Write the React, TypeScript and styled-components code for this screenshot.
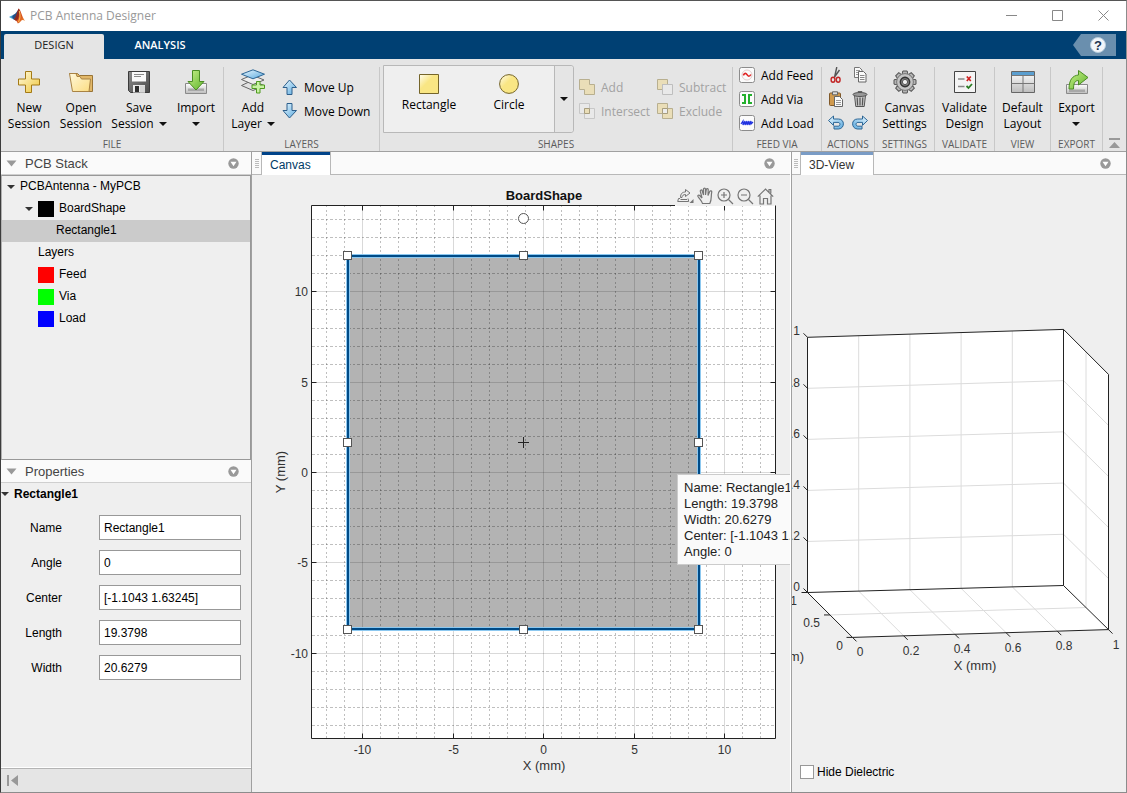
import React from 'react';
import styled, { createGlobalStyle } from 'styled-components';

const UI_FONT = '"Open Sans", "Noto Sans", sans-serif';
const PLOT_FONT = '"Liberation Sans", Arial, sans-serif';

const GlobalStyle = createGlobalStyle`
  *, *::before, *::after { box-sizing: border-box; }
  body { margin: 0; background: #efefef; font-family: ${PLOT_FONT}; font-size: 12px; color: #000; }
  button, input { font: inherit; color: inherit; }
  button { margin: 0; padding: 0; border: 0; background: none; cursor: default; }
  svg { display: block; flex: none; }
`;

const Shell = styled.div`
  min-height: 100vh;
  display: flex;
  flex-direction: column;
  overflow: hidden;
  border: 1px solid #8c8c8c;
  border-left-color: #3c3c3c;
  border-top-color: #555;
  background: #efefef;
`;

/* ---------- title bar ---------- */
const TitleBar = styled.header`
  height: 30px;
  display: flex;
  align-items: center;
  background: #fff;
  color: #999;
  font-family: ${UI_FONT};
  padding-left: 8px;
`;
const Title = styled.h1`
  flex: 1;
  margin: 0 0 0 5px;
  padding-bottom: 2px;
  font-size: 12px;
  font-weight: 400;
`;
const WindowButton = styled.button`
  width: 46px;
  height: 28px;
  margin-bottom: 2px;
  display: flex;
  align-items: center;
  justify-content: center;
`;

/* ---------- toolstrip ---------- */
const TabStrip = styled.nav`
  height: 28px;
  display: flex;
  align-items: flex-end;
  padding: 0 10px 0 3px;
  background: #004073;
  font-family: ${UI_FONT};
`;
const StripTab = styled.button<{ $active?: boolean }>`
  width: ${p => (p.$active ? 100 : 112)}px;
  height: 25px;
  padding-bottom: 4px;
  border-radius: 2px 2px 0 0;
  font-size: 11px;
  font-weight: ${p => (p.$active ? 400 : 600)};
  color: ${p => (p.$active ? '#222' : '#fff')};
  background: ${p => (p.$active ? '#e5e5e5' : 'transparent')};
`;
const HelpButton = styled.button`
  margin: 0 0 3px auto;
`;
const Ribbon = styled.div`
  height: 93px;
  display: flex;
  background: #e5e5e5;
  border-bottom: 1px solid #a0a0a0;
  font-family: ${UI_FONT};
  font-size: 12px;
`;
const Section = styled.section<{ $w: number }>`
  flex: none;
  width: ${p => p.$w}px;
  display: flex;
  flex-direction: column;
`;
const SectionBody = styled.div<{ $start?: boolean }>`
  height: 78px;
  display: flex;
  justify-content: ${p => (p.$start ? 'flex-start' : 'center')};
`;
const SectionLabel = styled.h2`
  margin: 0;
  font-size: 10px;
  line-height: 14px;
  font-weight: 400;
  text-align: center;
  white-space: nowrap;
  color: #5c5c5c;
`;
const Divider = styled.div`
  flex: none;
  width: 1px;
  margin-top: 8px;
  background: #c8c8c8;
`;
const BigButton = styled.button<{ $w: number }>`
  flex: none;
  width: ${p => p.$w}px;
  padding-top: 11px;
  display: flex;
  flex-direction: column;
  align-items: center;
  justify-content: flex-start;
  line-height: 16px;
  white-space: nowrap;
`;
const IconSlot = styled.span`
  height: 24px;
  display: flex;
  align-items: center;
`;
const BigLabel = styled.span`
  margin-top: 6px;
  display: flex;
  flex-direction: column;
  align-items: center;
`;
const LabelLine = styled.span`
  height: 16px;
  display: flex;
  align-items: center;
  gap: 5px;
`;
const Stack = styled.div<{ $w?: number; $three?: boolean }>`
  padding-top: ${p => (p.$three ? 4 : 16)}px;
  width: ${p => (p.$w ? p.$w + 'px' : 'auto')};
`;
const RowButton = styled.button`
  height: 24px;
  display: flex;
  align-items: center;
  gap: 6px;
  white-space: nowrap;
  &:disabled { color: #a2a2a2; }
  &:disabled svg { opacity: 0.5; }
`;
const Spread = styled.div`
  flex: 1;
  display: flex;
  align-items: flex-start;
  padding-left: 3px;
`;
const Gallery = styled.div`
  margin-top: 6px;
  margin-right: 5px;
  width: 191px;
  height: 68px;
  display: flex;
  background: #efefef;
  border: 1px solid #b8b8b8;
  border-radius: 0 3px 3px 0;
  padding-left: 5px;
`;
const GalleryItem = styled.button`
  width: 80px;
  padding-top: 8px;
  display: flex;
  flex-direction: column;
  align-items: center;
  justify-content: flex-start;
  gap: 3px;
  line-height: 16px;
`;
const GalleryMore = styled.button`
  margin-left: auto;
  width: 19px;
  display: flex;
  align-items: center;
  justify-content: center;
  background: #e5e5e5;
  border-left: 1px solid #b8b8b8;
  border-radius: 0 3px 3px 0;
`;
const IconGrid = styled.div`
  padding-top: 4px;
  display: grid;
  grid-template-columns: 24px 24px;
  grid-auto-rows: 24px;
`;
const IconButton = styled.button`
  display: flex;
  align-items: center;
  justify-content: center;
`;
const CollapseButton = styled.button`
  margin: auto 6px 3px auto;
`;

/* ---------- panes ---------- */
const Workspace = styled.main`
  flex: 1;
  display: grid;
  grid-template-columns: 251px minmax(0, 539fr) minmax(0, 335fr);
`;
const Sidebar = styled.aside`
  display: flex;
  flex-direction: column;
  border-right: 1px solid #a0a0a0;
`;
const PaneHeader = styled.div`
  height: 23px;
  flex: none;
  display: flex;
  align-items: center;
  gap: 8px;
  padding: 0 12px 0 5px;
  background: #fafafa;
  border-bottom: 1px solid #cfcfcf;
`;
const PaneTitle = styled.h2`
  flex: 1;
  margin: 0;
  font-size: 13px;
  font-weight: 400;
  color: #444;
`;
const Tree = styled.ul`
  flex: 1;
  margin: 0;
  padding: 0;
  list-style: none;
  border: 1px solid #989898;
  border-left-color: #b0b0b0;
`;
const TreeRow = styled.li<{ $indent: number; $selected?: boolean }>`
  height: 22px;
  display: flex;
  align-items: center;
  gap: 5px;
  padding-left: ${p => p.$indent}px;
  background: ${p => (p.$selected ? '#cbcbcb' : 'transparent')};
`;
const TreeText = styled.span`
  line-height: 14px;
  padding-bottom: 2px;
`;
const Swatch = styled.span<{ $color: string }>`
  width: 16px;
  height: 16px;
  background: ${p => p.$color};
`;
const Properties = styled.section`
  flex: none;
  min-height: 308px;
  display: flex;
  flex-direction: column;
`;
const GroupTitle = styled.h3`
  height: 22px;
  margin: 0 0 10px;
  display: flex;
  align-items: center;
  gap: 5px;
  font-size: 12px;
  font-weight: 700;
`;
const Form = styled.form`
  flex: 1;
  display: flex;
  flex-direction: column;
  gap: 10px;
  padding-right: 10px;
`;
const Field = styled.label`
  display: flex;
  align-items: center;
  height: 25px;
`;
const FieldName = styled.span`
  width: 61px;
  margin-right: 37px;
  text-align: right;
`;
const TextBox = styled.input`
  flex: 1;
  min-width: 0;
  height: 25px;
  padding: 0 4px;
  border: 1px solid #989898;
  border-radius: 0;
  background: #fff;
`;
const StatusBar = styled.footer`
  height: 24px;
  display: flex;
  align-items: center;
  padding-left: 6px;
  background: #e5e5e5;
  border-top: 1px solid #b4b4b4;
  box-shadow: 0 -1px 0 #fff;
`;
const Pane = styled.section<{ $edge: 'left' | 'right' }>`
  min-width: 0;
  display: flex;
  flex-direction: column;
  ${p => (p.$edge === 'left' ? 'border-left: 1px solid #a0a0a0;' : 'border-right: 1px solid #fff;')}
`;
const DocBar = styled.div<{ $inset: number }>`
  height: 23px;
  flex: none;
  display: flex;
  align-items: center;
  background: #fafafa;
  box-shadow: inset 0 -1px 0 #b8b8b8;
  padding: 0 15px 0 ${p => p.$inset}px;
`;
const DocTab = styled.button<{ $accent: string; $w: number }>`
  height: 23px;
  width: ${p => p.$w}px;
  margin: 0 auto 0 2px;
  padding-left: 8px;
  text-align: left;
  background: #fff;
  border: 1px solid #b8b8b8;
  border-width: 0 1px;
  box-shadow: inset 0 3px 0 ${p => p.$accent};
  color: ${p => (p.$accent === '#004389' ? '#003a66' : '#333')};
  padding-top: 3px;
`;
const PlotArea = styled.div`
  position: relative;
  flex: 1;
  min-height: 0;
  display: flex;
  overflow: hidden;
`;
const PlotSvg = styled.svg`
  flex: 1 1 0;
  min-width: 0;
  width: 100%;
  height: 100%;
  font-family: ${PLOT_FONT};
`;
const PlotTools = styled.div`
  position: absolute;
  top: 11px;
  right: 16px;
  display: flex;
  gap: 3px;
  background: #efefef;
  height: 20px;
  align-items: center;
  color: #757575;
`;
const Tooltip = styled.div`
  position: absolute;
  left: 425px;
  top: 299px;
  padding: 5px 6px 4px;
  border: 1px solid #ccc;
  background: #fafafa;
  font-size: 13px;
  line-height: 16px;
  white-space: nowrap;
  color: #222;
`;
const PaneFooter = styled.label`
  height: 40px;
  flex: none;
  display: flex;
  align-items: center;
  gap: 3px;
  padding-left: 8px;
`;
const CheckBox = styled.input`
  appearance: none;
  width: 14px;
  height: 14px;
  margin: 0;
  border: 1px solid #989898;
  background: #fff;
  &:checked { background: #004389; }
`;

/* ---------- small glyphs ---------- */
const Caret = ({ color = '#111' }: { color?: string }) => (
  <svg width="8" height="4" viewBox="0 0 8 4"><path d="M0 0h8L4 4z" fill={color} /></svg>
);
const PaneCaret = () => (
  <svg width="11" height="7" viewBox="0 0 11 7"><path d="M.5.5h10L5.500 6.500z" fill="#999" /></svg>
);
const MenuDot = () => (
  <svg width="11" height="11" viewBox="0 0 11 11">
    <circle cx="5.500" cy="5.500" r="5.200" fill="#999" /><path d="M2.500 3.800h6L5.500 8.300z" fill="#fff" />
  </svg>
);
const Grip = () => (
  <svg width="4" height="11" viewBox="0 0 4 11">
    <path d="M0 1.500h4M0 3.500h4M0 5.500h4M0 7.500h4M0 9.500h4" stroke="#bbb" />
  </svg>
);

const HiddenDefs = styled.svg`
  position: absolute;
`;
const Gradients = () => (
  <HiddenDefs width="0" height="0" aria-hidden="true">
    <defs>
      <linearGradient id="gold" x1="0" y1="0" x2="1" y2="1"><stop offset="0" stopColor="#fffbe0" /><stop offset="1" stopColor="#f0c73c" /></linearGradient>
      <linearGradient id="folder" x1="0" y1="0" x2="1" y2="1"><stop offset="0" stopColor="#fff8da" /><stop offset="1" stopColor="#fbdc82" /></linearGradient>
      <linearGradient id="shape" x1="0" y1="0" x2=".7" y2=".7"><stop offset="0" stopColor="#fffdf0" /><stop offset=".6" stopColor="#f9e684" /><stop offset="1" stopColor="#f9e684" /></linearGradient>
      <linearGradient id="green" x1="0" y1="0" x2="1" y2="1"><stop offset="0" stopColor="#c9f08a" /><stop offset="1" stopColor="#5fb52c" /></linearGradient>
      <linearGradient id="sky" x1="0" y1="0" x2="1" y2="1"><stop offset="0" stopColor="#eaf8ff" /><stop offset="1" stopColor="#5aa9de" /></linearGradient>
      <linearGradient id="metal" x1="0" y1="0" x2="0" y2="1"><stop offset="0" stopColor="#fff" /><stop offset="1" stopColor="#bdbdbd" /></linearGradient>
      <linearGradient id="steel" x1="0" y1="0" x2="1" y2="1"><stop offset="0" stopColor="#8c8c8c" /><stop offset="1" stopColor="#4a4a4a" /></linearGradient>
      <linearGradient id="flame" x1="0" y1="0" x2="1" y2="1"><stop offset="0" stopColor="#7a1c1c" /><stop offset=".5" stopColor="#d4481e" /><stop offset="1" stopColor="#f29a34" /></linearGradient>
    </defs>
  </HiddenDefs>
);

const Logo = () => (
  <svg width="16" height="16" viewBox="0 0 16 16">
    <path d="M0 9l4.500-2.200 2.300 1.800L4.800 11.500z" fill="#3f9bd0" />
    <path d="M4.500 6.800C7 6 8 3 9.800 1c-.8 3-1.300 6-3 9.200L4.800 11.500 3 9z" fill="#284f86" />
    <path d="M9.800.6C11.500 1.500 13 9 16 13c-2-1.300-3-1.200-4.200.2-1 1.200-2 2-3 2.300-.8-2.200-2-3.800-4-4 2.600-1.200 3.300-8.500 5-10.900z" fill="url(#flame)" />
    <path d="M9.800.6c.6 3 .8 7-1 10.600L7 13c-.7-.9-1.300-1.300-2.200-1.500C7.600 9.800 8.100 3 9.800.6z" fill="#8f2a20" />
    <path d="M10.300 3c.9 3 1.200 7-.8 11" stroke="#f7b04a" strokeWidth="1.200" fill="none" />
  </svg>
);
const PlusIcon = () => (
  <svg width="24" height="24" viewBox="0 0 24 24"><path d="M8.500 1.500h6v7.500h8v6h-8v7.500h-6V15h-7V9h7z" fill="url(#gold)" stroke="#a47a16" /></svg>
);
const FolderIcon = () => (
  <svg width="26" height="24" viewBox="0 0 26 24">
    <path d="M1.500 3.500h8l2 2h13V21.500H21z" fill="#e2b869" stroke="#997436" />
    <path d="M1.500 3.500h6.500l1 3h3l1.500 2.500h9L21 21.500H4.500z" fill="url(#folder)" stroke="#a98344" />
  </svg>
);
const SaveIcon = () => (
  <svg width="24" height="24" viewBox="0 0 24 24">
    <path d="M1.500 1.500h21v21h-19l-2-2z" fill="url(#steel)" stroke="#3b3b3b" />
    <path d="M5 2h14v9.500H5z" fill="#fafafa" /><path d="M7 4.500h10M7 6.500h7" stroke="#8a8a8a" />
    <path d="M6 15h12v7.500H6z" fill="#ececec" /><path d="M8 16h4v6H8z" fill="#2e2e2e" />
    <path d="M13 15.500h5v7h-5z" fill="#d5d5d5" />
  </svg>
);
const ImportIcon = () => (
  <svg width="24" height="24" viewBox="0 0 24 24">
    <path d="M1.500 13.500h21v10h-21z" fill="url(#metal)" stroke="#8a8a8a" /><path d="M4 18.500h16V21H4z" fill="#a8a8a8" />
    <path d="M8.500.5h7v11h4.500L12 20 4 11.500h4.500z" fill="url(#green)" stroke="#4b8d23" />
  </svg>
);
const LayersIcon = () => (
  <svg width="26" height="26" viewBox="0 0 26 26">
    <path d="M1.500 16.500L12 11.500l12 5-11 5z" fill="#e2e2e2" stroke="#666" />
    <path d="M1.500 10.500L12 6l12 5-11 4.500z" fill="#ededed" stroke="#666" />
    <path d="M1.500 5.200L13 .8l11.500 4.400L13 9.800z" fill="url(#sky)" stroke="#2d6695" />
    <path d="M16.500 12.500h3.500V16h4.500v3.500H20V24h-3.500v-4.500h-4.500V16h4.500z" fill="#c9f2a4" stroke="#4f9a20" />
  </svg>
);
const ArrowIcon = ({ down = false }: { down?: boolean }) => (
  <svg width="16" height="16" viewBox="0 0 16 16">
    <path d={down ? 'M5 .5h5v7h4.500L7.500 15 1 7.500h4z' : 'M5 15.500h5v-7h4.500L7.500 1 1 8.500h4z'} fill="url(#sky)" stroke="#2d5f8c" />
  </svg>
);
const SquareShape = () => (
  <svg width="20" height="20" viewBox="0 0 20 20"><path d="M.5.5h19v19H.5z" fill="url(#shape)" stroke="#75652a" /></svg>
);
const CircleShape = () => (
  <svg width="20" height="20" viewBox="0 0 20 20"><circle cx="10" cy="10" r="9.400" fill="url(#shape)" stroke="#75652a" /></svg>
);
const BoolIcon = ({ kind }: { kind: 'add' | 'subtract' | 'intersect' | 'exclude' }) => (
  <svg width="16" height="16" viewBox="0 0 16 16">
    {kind === 'add' && <path d="M.5.5h10v5h5v10h-10v-5h-5z" fill="#efd98c" stroke="#8d7a3c" />}
    {kind === 'subtract' && <><path d="M.5.5h10v5h-5v5h-5z" fill="#efd98c" stroke="#8d7a3c" /><path d="M5.500 5.500h10v10h-10z" fill="#eee" stroke="#999" /></>}
    {kind === 'intersect' && <><path d="M.5.5h10v10H.5zM5.500 5.500h10v10h-10z" fill="#eee" stroke="#aaa" /><path d="M5.500 5.500h5v5h-5z" fill="#efd98c" stroke="#6d5a1c" /></>}
    {kind === 'exclude' && <><path d="M.5.5h10v10H.5zM5.500 5.500h10v10h-10z" fill="#efd98c" stroke="#8d7a3c" /><path d="M5.500 5.500h5v5h-5z" fill="#f5f5f5" stroke="#6d5a1c" /></>}
  </svg>
);
const ChipIcon = ({ kind }: { kind: 'feed' | 'via' | 'load' }) => (
  <svg width="16" height="16" viewBox="0 0 16 16">
    <rect x=".5" y=".5" width="15" height="15" rx="2" fill="#fbfbfb" stroke="#8c8c8c" />
    {kind === 'feed' && <><circle cx="8" cy="8" r="5" fill="none" stroke="#e3cccc" /><path d="M4.300 8.300c1.200-2.600 2.700-2.300 3.700-.6s2.600 2.300 3.800-.2" fill="none" stroke="#e02424" strokeWidth="1.600" /></>}
    {kind === 'via' && <path d="M3 3h4v10H3v-2h2V5H3zM13 3H9v10h4v-2h-2V5h2z" fill="#22b02c" />}
    {kind === 'load' && <path d="M2 9l2-3v4l2-4v4l2-4v4l2-4v4l2-4v3l2-2" fill="none" stroke="#1c2ee0" strokeWidth="1.200" />}
  </svg>
);
const CutIcon = () => (
  <svg width="16" height="16" viewBox="0 0 16 16">
    <path d="M8.800 0L6.500 10.500M11.500 3L6.500 10" stroke="#555" strokeWidth="1.400" fill="none" />
    <ellipse cx="5" cy="12.700" rx="1.900" ry="2.500" fill="none" stroke="#c22626" strokeWidth="1.400" /><ellipse cx="10.200" cy="12.700" rx="1.900" ry="2.500" fill="none" stroke="#c22626" strokeWidth="1.400" />
  </svg>
);
const CopyIcon = () => (
  <svg width="16" height="16" viewBox="0 0 16 16">
    <path d="M2.500.5h5l2.500 2.500v7.500H2.500z" fill="#fafafa" stroke="#777" /><path d="M4 3.500h4M4 5.500h4M4 7.500h2" stroke="#999" />
    <path d="M6.500 4.500h5l2.500 2.500v8H6.500z" fill="#fafafa" stroke="#666" /><path d="M8 8.500h4.500M8 10.500h4.500M8 12.500h4.500" stroke="#888" />
  </svg>
);
const PasteIcon = () => (
  <svg width="16" height="16" viewBox="0 0 16 16">
    <rect x="1.500" y="2" width="11" height="12.500" rx="1" fill="#d09a4e" stroke="#80592a" /><path d="M4.500.8h5v3h-5z" fill="#ddd" stroke="#666" />
    <path d="M6.500 5.500h5l3 3v7h-8z" fill="#fafafa" stroke="#666" /><path d="M8 9.500h5M8 11.500h5M8 13.500h5" stroke="#999" />
  </svg>
);
const TrashIcon = () => (
  <svg width="16" height="16" viewBox="0 0 16 16">
    <path d="M2.500 4.500h11l-1.300 11H3.800z" fill="#c9c9c9" stroke="#555" /><ellipse cx="8" cy="3.500" rx="7" ry="2" fill="#999" stroke="#555" /><path d="M6 1.500V.6h4v.9" fill="none" stroke="#555" />
    <path d="M5.200 6.500l.4 8M8 6.500v8M10.800 6.500l-.4 8" stroke="#555" strokeWidth="1.200" />
  </svg>
);
const UndoIcon = ({ redo = false }: { redo?: boolean }) => (
  <svg width="16" height="16" viewBox="0 0 16 16">
    <g transform={redo ? 'translate(16 0) scale(-1 1)' : undefined}>
      <path d="M.5 5.500L5.500 1v3h5c6.500 0 6.500 9.500.2 10H6v-2.800h4c2.600 0 2.600-3.800 0-3.800H5.500v3z" fill="url(#sky)" stroke="#2d6695" />
    </g>
  </svg>
);
const GearIcon = () => (
  <svg width="24" height="24" viewBox="0 0 24 24">
    {[0, 45, 90, 135, 180, 225, 270, 315].map(a => (
      <path key={a} d="M9.200 4.500l.6-3.500h4.400l.6 3.500z" fill="#b5b5b5" stroke="#555" transform={`rotate(${a} 12 12)`} />
    ))}
    <circle cx="12" cy="12" r="8.400" fill="#c4c4c4" stroke="#777" />
    <circle cx="12" cy="12" r="4.600" fill="#8a8a8a" stroke="#333" strokeWidth="1.600" /><circle cx="12" cy="12" r="2.600" fill="#f0f0f0" stroke="#555" />
  </svg>
);
const ValidateIcon = () => (
  <svg width="24" height="24" viewBox="0 0 24 24">
    <path d="M1.500 1.500h21v21h-21z" fill="#f4f4f4" stroke="#444" /><path d="M5 9h6.500M5 16.500h6.500" stroke="#888" strokeWidth="1.500" />
    <path d="M13.800 6.500l4 4.500M17.800 6.500l-4 4.500" stroke="#cf2020" strokeWidth="1.700" /><path d="M13.500 16l2 2 3.500-4" fill="none" stroke="#2b7d24" strokeWidth="1.800" />
  </svg>
);
const LayoutIcon = () => (
  <svg width="26" height="24" viewBox="0 0 26 24">
    <path d="M1.500 1.500h23v21h-23z" fill="url(#metal)" stroke="#666" /><path d="M2 2h22v3H2z" fill="#5b9fd0" />
    <path d="M1.500 5.500h23M13 5.500v17M1.500 13.500h23" stroke="#777" fill="none" />
  </svg>
);
const ExportIcon = () => (
  <svg width="24" height="26" viewBox="0 0 24 26">
    <path d="M1.500 15.500h21v9h-21z" fill="url(#metal)" stroke="#8a8a8a" /><path d="M4 20.500h16V23H4z" fill="#a8a8a8" />
    <path d="M4 20c0-9 3.500-13.500 9.500-14V1.500l9.500 7-9.500 7.500v-4.500C10 11.500 8.500 14 8.500 20z" fill="url(#green)" stroke="#4b8d23" />
  </svg>
);
const HelpBadge = () => (
  <svg width="43" height="22" viewBox="0 0 43 22">
    <path d="M0 11L8 0h35v22H8z" fill="#6a8fae" /><circle cx="25" cy="11" r="7.500" fill="#f2f6fa" stroke="#b9cddd" />
    <text x="25" y="16" textAnchor="middle" fontFamily={PLOT_FONT} fontSize="13" fontWeight="700" fill="#1f3550">?</text>
  </svg>
);

/* ---------- board plot ---------- */
const px = (v: number) => Math.round(543 + v * 18.1) + 0.5;
const py = (v: number) => Math.round(472 - v * 18.06) + 0.5;
const range = (a: number, b: number) => Array.from({ length: b - a + 1 }, (_, i) => a + i);
const AX = { l: 311.5, r: 775.5, t: 205.5, b: 738.5 };
const FIVES = [-10, -5, 0, 5, 10];

const BoardPlot = () => {
  const minorX = range(-12, 12).filter(v => v % 5 !== 0);
  const minorY = range(-14, 14).filter(v => v % 5 !== 0);
  return (
    <PlotSvg viewBox="252 175 538 617" role="img" aria-label="BoardShape">
      <rect x={AX.l} y={AX.t} width={AX.r - AX.l} height={AX.b - AX.t} fill="#fff" />
      <rect x="348" y="256" width="351" height="373" fill="#b3b3b3" />
      <g stroke="#000" strokeOpacity=".25">
        {minorX.map(v => <path key={v} d={`M${px(v)} ${AX.b - 0.5}V${AX.t}`} strokeDasharray="2 2 2 3" />)}
        {minorY.map(v => <path key={v} d={`M${AX.l + 0.5} ${py(v)}H${AX.r}`} strokeDasharray="3 2 2 2" />)}
      </g>
      <g stroke="#000" strokeOpacity=".15">
        {FIVES.map(v => <path key={v} d={`M${px(v)} ${AX.b}V${AX.t}M${AX.l} ${py(v)}H${AX.r}`} />)}
      </g>
      <path d={`M675 ${AX.t}H${AX.l}V${AX.b}H${AX.r}V${AX.t}`} fill="none" stroke="#222" />
      <g stroke="#222">
        {FIVES.map(v => (
          <path key={v} d={`M${px(v)} ${AX.b}v-5M${px(v)} ${AX.t}v5M${AX.l} ${py(v)}h5M${AX.r} ${py(v)}h-5`} />
        ))}
      </g>
      <rect x="348" y="256" width="351" height="373" fill="none" stroke="#8cc8f0" strokeWidth="4" />
      <rect x="348" y="256" width="351" height="373" fill="none" stroke="#004b87" strokeWidth="2" />
      <g fill="#fff" stroke="#555">
        {[[347, 255], [523, 255], [698, 255], [347, 442], [698, 442], [347, 629], [523, 629], [698, 629]].map(([x, y]) => (
          <rect key={`${x}-${y}`} x={x - 3.5} y={y - 3.5} width="8" height="8" />
        ))}
        <circle cx="523.500" cy="218.500" r="5" />
      </g>
      <path d="M518 442.500h11M523.500 437v11" stroke="#222" />
      <g fontSize="12" fill="#333">
        {FIVES.map(v => <text key={v} x={px(v)} y="754" textAnchor="middle">{v}</text>)}
        {FIVES.map(v => <text key={v} x="308" y={py(v) + 4} textAnchor="end">{v}</text>)}
      </g>
      <g fontSize="13" fill="#333" textAnchor="middle">
        <text x="544" y="770">X (mm)</text>
        <text transform="translate(285 472) rotate(-90)">Y (mm)</text>
        <text x="544" y="200" fontWeight="700" fill="#111">BoardShape</text>
      </g>
    </PlotSvg>
  );
};

/* ---------- 3D axes ---------- */
type Pt = [number, number];
const lerp = (a: Pt, b: Pt, t: number): Pt => [a[0] + (b[0] - a[0]) * t, a[1] + (b[1] - a[1]) * t];
const seg = (a: Pt, b: Pt) => `M${a[0]} ${a[1]}L${b[0]} ${b[1]}`;
const A: Pt = [807.5, 337.3], B: Pt = [1063.5, 329.4], C: Pt = [1108.5, 374.4];
const D: Pt = [807.5, 592.5], E: Pt = [1063.5, 585.5], F: Pt = [1108.5, 629.6], G: Pt = [852.5, 637.4];
const FIFTHS = [0.2, 0.4, 0.6, 0.8];

const SpacePlot = () => (
  <PlotSvg viewBox="792 175 334 577" role="img" aria-label="3D view">
    <path d={`M${A}L${B}L${C}L${F}L${G}L${D}Z`} fill="#fff" />
    <g stroke="#dcdcdc" fill="none">
      {FIFTHS.map(t => (
        <path key={t} d={
          seg(lerp(A, B, t), lerp(D, E, t)) + seg(lerp(A, D, t), lerp(B, E, t)) +
          seg(lerp(B, E, t), lerp(C, F, t)) + seg(lerp(D, E, t), lerp(G, F, t))
        } />
      ))}
      <path d={seg(lerp(B, C, 0.5), lerp(E, F, 0.5)) + seg(lerp(D, G, 0.5), lerp(E, F, 0.5))} />
    </g>
    <path d={`M${A}L${B}L${C}L${F}L${G}L${D}ZM${D}L${E}L${F}M${B}L${E}`} fill="none" stroke="#222" />
    <g stroke="#222">
      {[0, ...FIFTHS, 1].map(t => {
        const z = lerp(A, D, t), x = lerp(G, F, t);
        return <path key={t} d={`M${z}l-4-4M${x}l4 4`} />;
      })}
      {[0, 0.5, 1].map(t => <path key={t} d={`M${lerp(D, G, t)}h-6`} />)}
    </g>
    <g fontSize="12" fill="#333">
      <g textAnchor="end">
        <text x="800" y="335">1</text><text x="800" y="387">0.8</text><text x="800" y="438">0.6</text>
        <text x="800" y="489">0.4</text><text x="800" y="540">0.2</text><text x="800" y="591">0</text>
        <text x="797" y="605">1</text><text x="820" y="627">0.5</text><text x="843" y="650">0</text>
      </g>
      <g textAnchor="middle">
        <text x="860" y="656">0</text><text x="911" y="655">0.2</text><text x="962" y="653">0.4</text>
        <text x="1013" y="652">0.6</text><text x="1064" y="650">0.8</text><text x="1116" y="649">1</text>
      </g>
      <text x="975" y="670" fontSize="13" textAnchor="middle">X (mm)</text>
      <text x="804" y="661" fontSize="13" textAnchor="end">Y (mm)</text>
    </g>
  </PlotSvg>
);

const ToolButton = ({ w, icon, lines, caret }: { w: number; icon: React.ReactNode; lines: string[]; caret?: boolean }) => (
  <BigButton $w={w} type="button">
    <IconSlot>{icon}</IconSlot>
    <BigLabel>
      {lines.map((l, i) => (
        <LabelLine key={l}>{l}{caret && i === 1 && <Caret />}</LabelLine>
      ))}
      {caret && lines.length === 1 && <LabelLine><Caret /></LabelLine>}
    </BigLabel>
  </BigButton>
);

const fields: [string, string][] = [
  ['Name', 'Rectangle1'], ['Angle', '0'], ['Center', '[-1.1043 1.63245]'], ['Length', '19.3798'], ['Width', '20.6279'],
];

const Tools = () => (
  <PlotTools>
    <IconButton aria-label="Export plot"><svg width="17" height="16" viewBox="0 0 17 16" fill="none" stroke="currentColor"><path d="M3 10.500H1.500l-.8 3h11l-.7-3M3.500 11.500h6.500M3.500 9.500C3.500 5.500 5.500 4 8.500 4V1.500L13 5 8.500 8.500V6.500c-2 0-3.500 1-3.500 3z" /><path d="M12.500 15h4v-4z" fill="currentColor" stroke="none" /></svg></IconButton>
    <IconButton aria-label="Pan"><svg width="17" height="18" viewBox="0 0 17 18" fill="none" stroke="currentColor" strokeWidth="1.200"><path d="M5.500 16.500c-.5-2.500-3-4.500-4.500-7-.6-1.200.8-2 1.700-1L5 11 3.300 4.200c-.2-1.400 1.600-1.700 1.900-.4L6.500 8V2.200c0-1.400 2-1.400 2 0V8l.8-5.500c.3-1.400 2.100-1 1.900.4L11 8.500l1.700-4c.6-1.200 2.400-.7 2 .8C13.800 9 15 12.500 12.800 16.500z" /></svg></IconButton>
    <IconButton aria-label="Zoom in"><svg width="17" height="17" viewBox="0 0 17 17" fill="none" stroke="currentColor" strokeWidth="1.200"><circle cx="7" cy="7" r="6" /><path d="M11.500 11.500L16 16M4 7h6M7 4v6" /></svg></IconButton>
    <IconButton aria-label="Zoom out"><svg width="17" height="17" viewBox="0 0 17 17" fill="none" stroke="currentColor" strokeWidth="1.200"><circle cx="7" cy="7" r="6" /><path d="M11.500 11.500L16 16M4 7h6" /></svg></IconButton>
    <IconButton aria-label="Restore view"><svg width="17" height="17" viewBox="0 0 17 17" fill="none" stroke="currentColor" strokeWidth="1.200"><path d="M.8 8.700L8.500 1l7.700 7.700M3 7.500v8.500h3.500v-5.500h4V16H14V7.500M12 4V1.500h1.800v4" /></svg></IconButton>
  </PlotTools>
);

export default function App() {
  return (
    <Shell>
      <GlobalStyle />
      <Gradients />
      <TitleBar>
        <Logo />
        <Title>PCB Antenna Designer</Title>
        <WindowButton aria-label="Minimize"><svg width="11" height="11" viewBox="0 0 11 11"><path d="M0 5.500h11" stroke="#888" /></svg></WindowButton>
        <WindowButton aria-label="Maximize"><svg width="11" height="11" viewBox="0 0 11 11"><path d="M.5.5h10v10H.5z" fill="none" stroke="#888" /></svg></WindowButton>
        <WindowButton aria-label="Close"><svg width="11" height="11" viewBox="0 0 11 11"><path d="M.5.5l10 10M10.500.5l-10 10" stroke="#888" /></svg></WindowButton>
      </TitleBar>
      <TabStrip>
        <StripTab $active>DESIGN</StripTab>
        <StripTab>ANALYSIS</StripTab>
        <HelpButton aria-label="Help"><HelpBadge /></HelpButton>
      </TabStrip>
      <Ribbon>
        <Section $w={222}>
          <SectionBody $start>
            <ToolButton w={56} icon={<PlusIcon />} lines={['New', 'Session']} />
            <ToolButton w={48} icon={<FolderIcon />} lines={['Open', 'Session']} />
            <ToolButton w={68} icon={<SaveIcon />} lines={['Save', 'Session']} caret />
            <ToolButton w={46} icon={<ImportIcon />} lines={['Import']} caret />
          </SectionBody>
          <SectionLabel>FILE</SectionLabel>
        </Section>
        <Divider />
        <Section $w={155}>
          <SectionBody $start>
            <ToolButton w={58} icon={<LayersIcon />} lines={['Add', 'Layer']} caret />
            <Stack>
              <RowButton><ArrowIcon />Move Up</RowButton>
              <RowButton><ArrowIcon down />Move Down</RowButton>
            </Stack>
          </SectionBody>
          <SectionLabel>LAYERS</SectionLabel>
        </Section>
        <Divider />
        <Section $w={352}>
          <SectionBody>
            <Spread>
              <Gallery>
                <GalleryItem><SquareShape />Rectangle</GalleryItem>
                <GalleryItem><CircleShape />Circle</GalleryItem>
                <GalleryMore aria-label="More shapes"><Caret /></GalleryMore>
              </Gallery>
              <Stack $w={78}>
                <RowButton disabled><BoolIcon kind="add" />Add</RowButton>
                <RowButton disabled><BoolIcon kind="intersect" />Intersect</RowButton>
              </Stack>
              <Stack>
                <RowButton disabled><BoolIcon kind="subtract" />Subtract</RowButton>
                <RowButton disabled><BoolIcon kind="exclude" />Exclude</RowButton>
              </Stack>
            </Spread>
          </SectionBody>
          <SectionLabel>SHAPES</SectionLabel>
        </Section>
        <Divider />
        <Section $w={88}>
          <SectionBody>
            <Stack $w={76} $three>
              <RowButton><ChipIcon kind="feed" />Add Feed</RowButton>
              <RowButton><ChipIcon kind="via" />Add Via</RowButton>
              <RowButton><ChipIcon kind="load" />Add Load</RowButton>
            </Stack>
          </SectionBody>
          <SectionLabel>FEED VIA</SectionLabel>
        </Section>
        <Divider />
        <Section $w={52}>
          <SectionBody>
            <IconGrid>
              <IconButton aria-label="Cut"><CutIcon /></IconButton>
              <IconButton aria-label="Copy"><CopyIcon /></IconButton>
              <IconButton aria-label="Paste"><PasteIcon /></IconButton>
              <IconButton aria-label="Delete"><TrashIcon /></IconButton>
              <IconButton aria-label="Undo"><UndoIcon /></IconButton>
              <IconButton aria-label="Redo"><UndoIcon redo /></IconButton>
            </IconGrid>
          </SectionBody>
          <SectionLabel>ACTIONS</SectionLabel>
        </Section>
        <Divider />
        <Section $w={59}>
          <SectionBody><ToolButton w={59} icon={<GearIcon />} lines={['Canvas', 'Settings']} /></SectionBody>
          <SectionLabel>SETTINGS</SectionLabel>
        </Section>
        <Divider />
        <Section $w={59}>
          <SectionBody><ToolButton w={59} icon={<ValidateIcon />} lines={['Validate', 'Design']} /></SectionBody>
          <SectionLabel>VALIDATE</SectionLabel>
        </Section>
        <Divider />
        <Section $w={55}>
          <SectionBody><ToolButton w={55} icon={<LayoutIcon />} lines={['Default', 'Layout']} /></SectionBody>
          <SectionLabel>VIEW</SectionLabel>
        </Section>
        <Divider />
        <Section $w={51}>
          <SectionBody><ToolButton w={51} icon={<ExportIcon />} lines={['Export']} caret /></SectionBody>
          <SectionLabel>EXPORT</SectionLabel>
        </Section>
        <Divider />
        <CollapseButton aria-label="Collapse toolstrip">
          <svg width="11" height="10" viewBox="0 0 11 10"><path d="M0 0h11v2H0zM5.500 4L11 10H0z" fill="#999" /></svg>
        </CollapseButton>
      </Ribbon>
      <Workspace>
        <Sidebar>
          <PaneHeader><PaneCaret /><PaneTitle>PCB Stack</PaneTitle><MenuDot /></PaneHeader>
          <Tree>
            <TreeRow $indent={5}><Caret color="#333" /><TreeText>PCBAntenna - MyPCB</TreeText></TreeRow>
            <TreeRow $indent={23}><Caret color="#333" /><Swatch $color="#000" /><TreeText>BoardShape</TreeText></TreeRow>
            <TreeRow $indent={54} $selected><TreeText>Rectangle1</TreeText></TreeRow>
            <TreeRow $indent={36}><TreeText>Layers</TreeText></TreeRow>
            <TreeRow $indent={36}><Swatch $color="#f00" /><TreeText>Feed</TreeText></TreeRow>
            <TreeRow $indent={36}><Swatch $color="#0f0" /><TreeText>Via</TreeText></TreeRow>
            <TreeRow $indent={36}><Swatch $color="#00f" /><TreeText>Load</TreeText></TreeRow>
          </Tree>
          <Properties>
            <PaneHeader><PaneCaret /><PaneTitle>Properties</PaneTitle><MenuDot /></PaneHeader>
            <GroupTitle><Caret color="#333" />Rectangle1</GroupTitle>
            <Form>
              {fields.map(([name, value]) => (
                <Field key={name}><FieldName>{name}</FieldName><TextBox type="text" defaultValue={value} /></Field>
              ))}
            </Form>
          </Properties>
          <StatusBar>
            <IconButton aria-label="Collapse sidebar"><svg width="11" height="11" viewBox="0 0 11 11"><path d="M0 0h2v11H0zM11 0v11L4 5.500z" fill="#999" /></svg></IconButton>
          </StatusBar>
        </Sidebar>
        <Pane $edge="right">
          <DocBar $inset={3}><Grip /><DocTab $accent="#004389" $w={70}>Canvas</DocTab><MenuDot /></DocBar>
          <PlotArea>
            <BoardPlot />
            <Tools />
            <Tooltip>
              <div>Name: Rectangle1</div>
              <div>Length: 19.3798</div>
              <div>Width: 20.6279</div>
              <div>Center: [-1.1043 1.63245]</div>
              <div>Angle: 0</div>
            </Tooltip>
          </PlotArea>
        </Pane>
        <Pane $edge="left">
          <DocBar $inset={2}><Grip /><DocTab $accent="#7a9cc6" $w={74}>3D-View</DocTab><MenuDot /></DocBar>
          <PlotArea><SpacePlot /></PlotArea>
          <PaneFooter><CheckBox type="checkbox" />Hide Dielectric</PaneFooter>
        </Pane>
      </Workspace>
    </Shell>
  );
}
